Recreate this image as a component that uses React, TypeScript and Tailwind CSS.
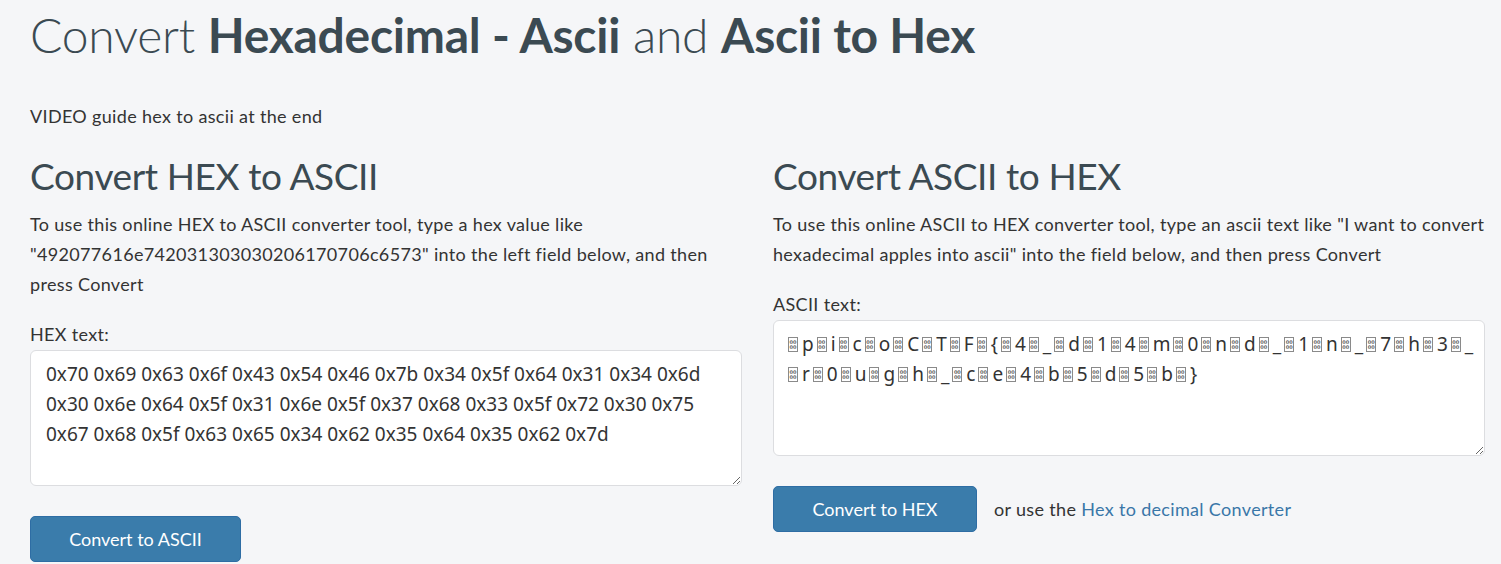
const HEX =
  '0x70 0x69 0x63 0x6f 0x43 0x54 0x46 0x7b 0x34 0x5f 0x64 0x31 0x34 0x6d 0x30 0x6e 0x64 0x5f 0x31 0x6e 0x5f 0x37 0x68 0x33 0x5f 0x72 0x30 0x75 0x67 0x68 0x5f 0x63 0x65 0x34 0x62 0x35 0x64 0x35 0x62 0x7d';

const DECODED = HEX.split(' ').map((h) => String.fromCharCode(parseInt(h, 16)));

// the NUL chars show up as little hex boxes in the original
function NulBox() {
  return (
    <span className="ml-[3px] mr-[4px] inline-block h-[15px] w-[10px] translate-y-[1px] overflow-hidden border border-[#8a8a8a] pt-[2px] text-center font-[DejaVu_Sans] text-[5px] leading-[5px] font-bold text-[#666]">
      00
      <br />
      00
    </span>
  );
}

const body = { fontFamily: 'Lato, "Noto Sans", sans-serif' };
const mono = { fontFamily: '"Noto Sans", "Open Sans", sans-serif' };

export default function App() {
  return (
    <div className="min-h-screen bg-[#f5f6f8] pl-[30px] pr-[16px] text-[18px] tracking-[0.33px] text-[#333]" style={body}>
      <h1 className="pt-[10px] text-[48px] leading-[50px] tracking-[-0.25px] text-[#3b4a52] font-light">
        Convert <b className="font-bold">Hexadecimal - Ascii</b> and <b className="font-bold">Ascii to Hex</b>
      </h1>

      <p className="mt-[41px] leading-[30px]">VIDEO guide hex to ascii at the end</p>

      <div className="mt-[23px] grid grid-cols-2 gap-[31px]">
        {/* hex -> ascii */}
        <div>
          <h2 className="text-[37px] leading-[44px] tracking-[-0.4px] text-[#3b4a52]">Convert HEX to ASCII</h2>
          <p className="mt-[11px] leading-[30px]">
            To use this online HEX to ASCII converter tool, type a hex value like
            "492077616e742031303030206170706c6573" into the left field below, and then press Convert
          </p>
          <label className="mt-[20px] block leading-[30px]">HEX text:</label>
          <textarea
            readOnly
            value={HEX}
            className="mt-px block h-[136px] w-full resize rounded-[6px] border border-[#dcdde0] bg-white py-[8px] pl-[15px] pr-4 text-[19px] leading-[30px] tracking-normal text-[#333] outline-none"
            style={mono}
          />
          <button className="mt-[30px] h-[46px] w-[211px] rounded-[5px] border border-[#2e6da4] bg-[#3a7cab] tracking-normal text-white">
            Convert to ASCII
          </button>
        </div>

        {/* ascii -> hex */}
        <div>
          <h2 className="text-[37px] leading-[44px] tracking-[-0.4px] text-[#3b4a52]">Convert ASCII to HEX</h2>
          <p className="mt-[11px] mr-[-6px] leading-[30px]">
            To use this online ASCII to HEX converter tool, type an ascii text like "I want to convert
            hexadecimal apples into ascii" into the field below, and then press Convert
          </p>
          <label className="mt-[20px] block leading-[30px]">ASCII text:</label>
          <div
            className="mt-px h-[136px] w-full resize overflow-auto rounded-[6px] border border-[#dcdde0] bg-white py-[8px] pl-[11px] pr-[10px] text-[19px] leading-[30px] tracking-normal text-[#333]"
            style={mono}
          >
            {DECODED.map((c, i) => (
              <span key={i} className="whitespace-nowrap">
                <NulBox />
                {c}
              </span>
            ))}
          </div>
          <div className="mt-[30px] flex items-center">
            <button className="h-[46px] w-[204px] rounded-[5px] border border-[#2e6da4] bg-[#3a7cab] tracking-normal text-white">
              Convert to HEX
            </button>
            <span className="ml-[17px]">
              or use the <a className="text-[#3a77a8]">Hex to decimal Converter</a>
            </span>
          </div>
        </div>
      </div>
    </div>
  );
}
